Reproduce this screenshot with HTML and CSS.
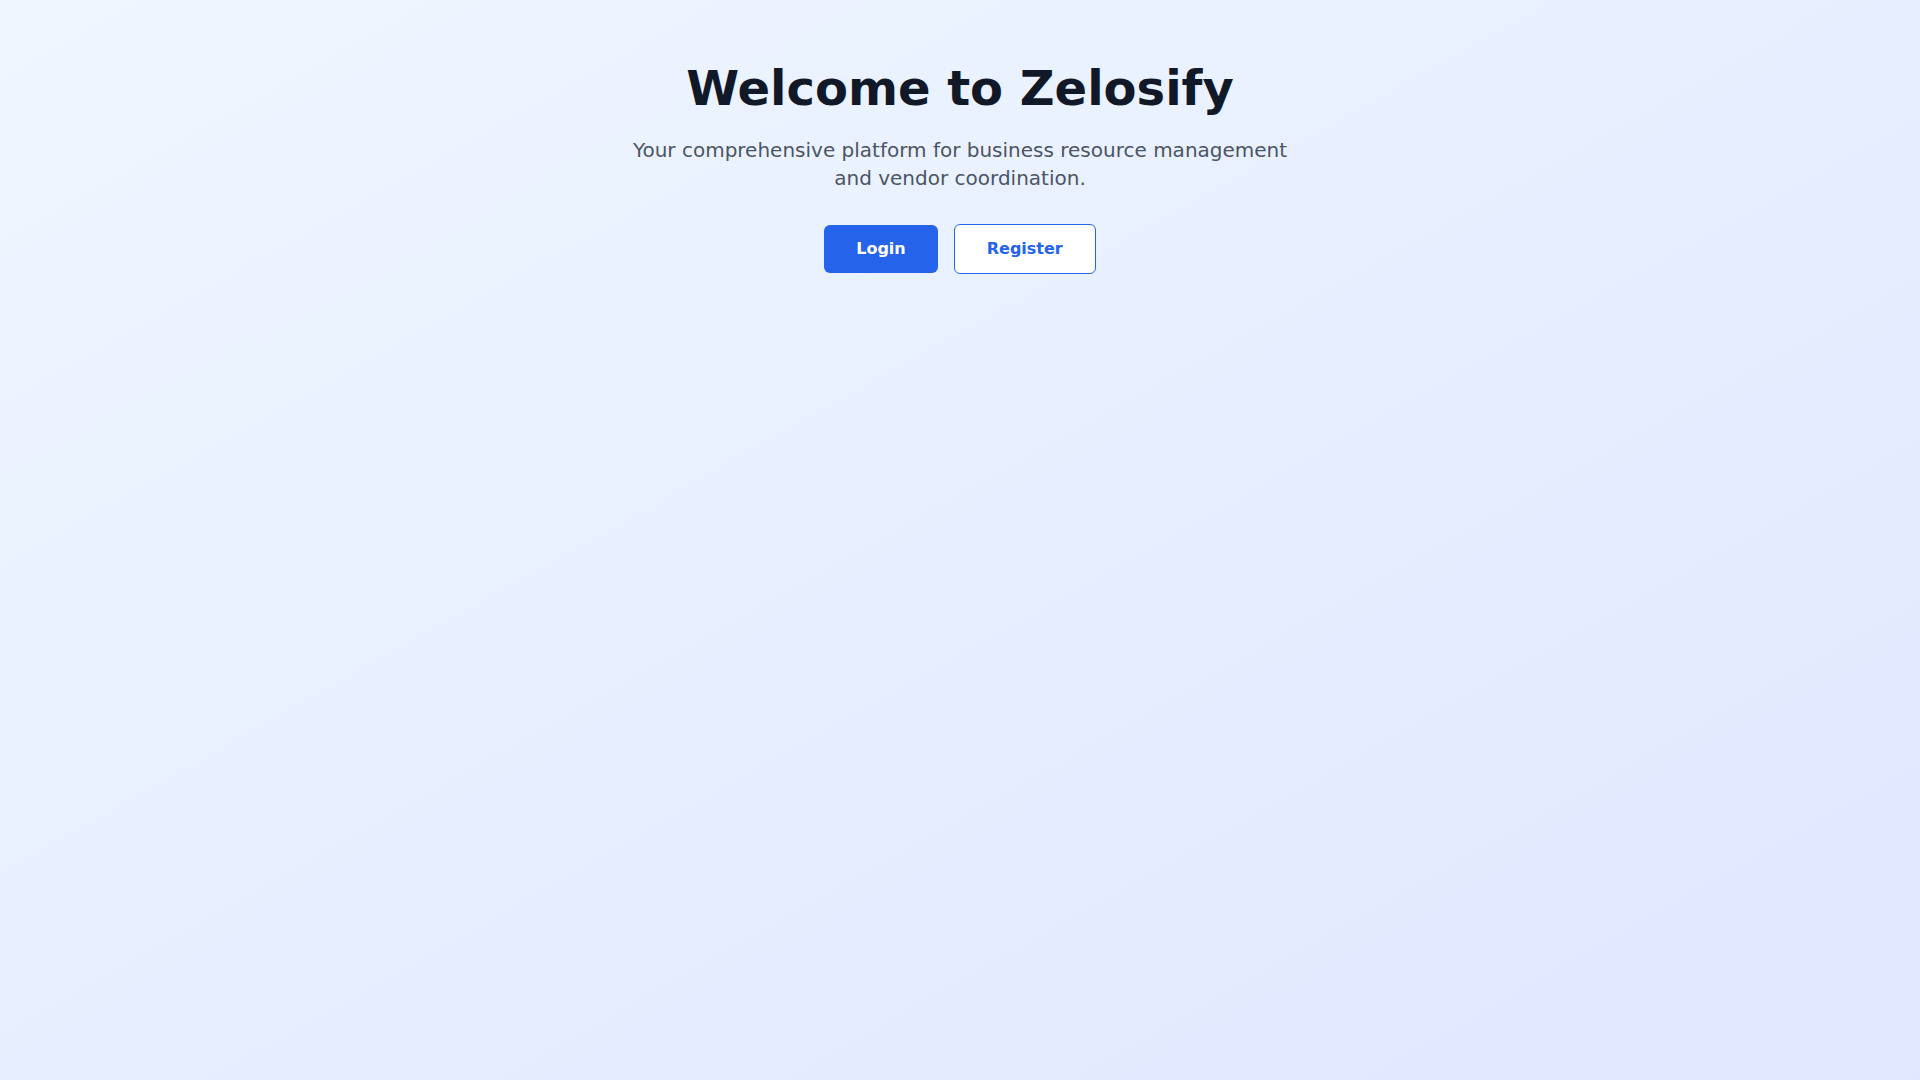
FILE: index.html
```html
<!DOCTYPE html>
<html lang="en">
<head>
<meta charset="utf-8">
<title>Zelosify</title>
<link rel="stylesheet" href="styles.css">
</head>
<body>
<main class="page">
  <section class="hero">
    <h1 class="title">Welcome to Zelosify</h1>
    <p class="subtitle">Your comprehensive platform for business resource management and vendor coordination.</p>
    <div class="actions">
      <button class="btn btn-primary">Login</button>
      <button class="btn btn-outline">Register</button>
    </div>
  </section>
</main>
</body>
</html>
```
FILE: styles.css
```css
* { box-sizing: border-box; }
html, body { margin: 0; padding: 0; }
body {
  font-family: "DejaVu Sans", sans-serif;
}
.page {
  min-height: 100vh;
  background: linear-gradient(to bottom right, #eff6ff, #e0e7ff);
  display: flex;
  flex-direction: column;
  align-items: center;
  padding-top: 64px;
}
.hero {
  display: flex;
  flex-direction: column;
  align-items: center;
  text-align: center;
}
.title {
  margin: 0 0 24px;
  font-size: 48px;
  line-height: 48px;
  font-weight: 700;
  color: #111827;
}
.subtitle {
  margin: 0 0 32px;
  max-width: 672px;
  font-size: 20px;
  line-height: 28px;
  color: #4b5563;
}
.actions {
  display: flex;
  align-items: center;
  gap: 16px;
}
.btn {
  font-family: "DejaVu Sans", sans-serif;
  font-size: 16px;
  line-height: 24px;
  font-weight: 700;
  padding: 12px 32px;
  border-radius: 6px;
  cursor: pointer;
}
.btn-primary {
  background: #2563eb;
  color: #ffffff;
  border: none;
}
.btn-outline {
  background: #ffffff;
  color: #2563eb;
  border: 1px solid #2563eb;
}
```
